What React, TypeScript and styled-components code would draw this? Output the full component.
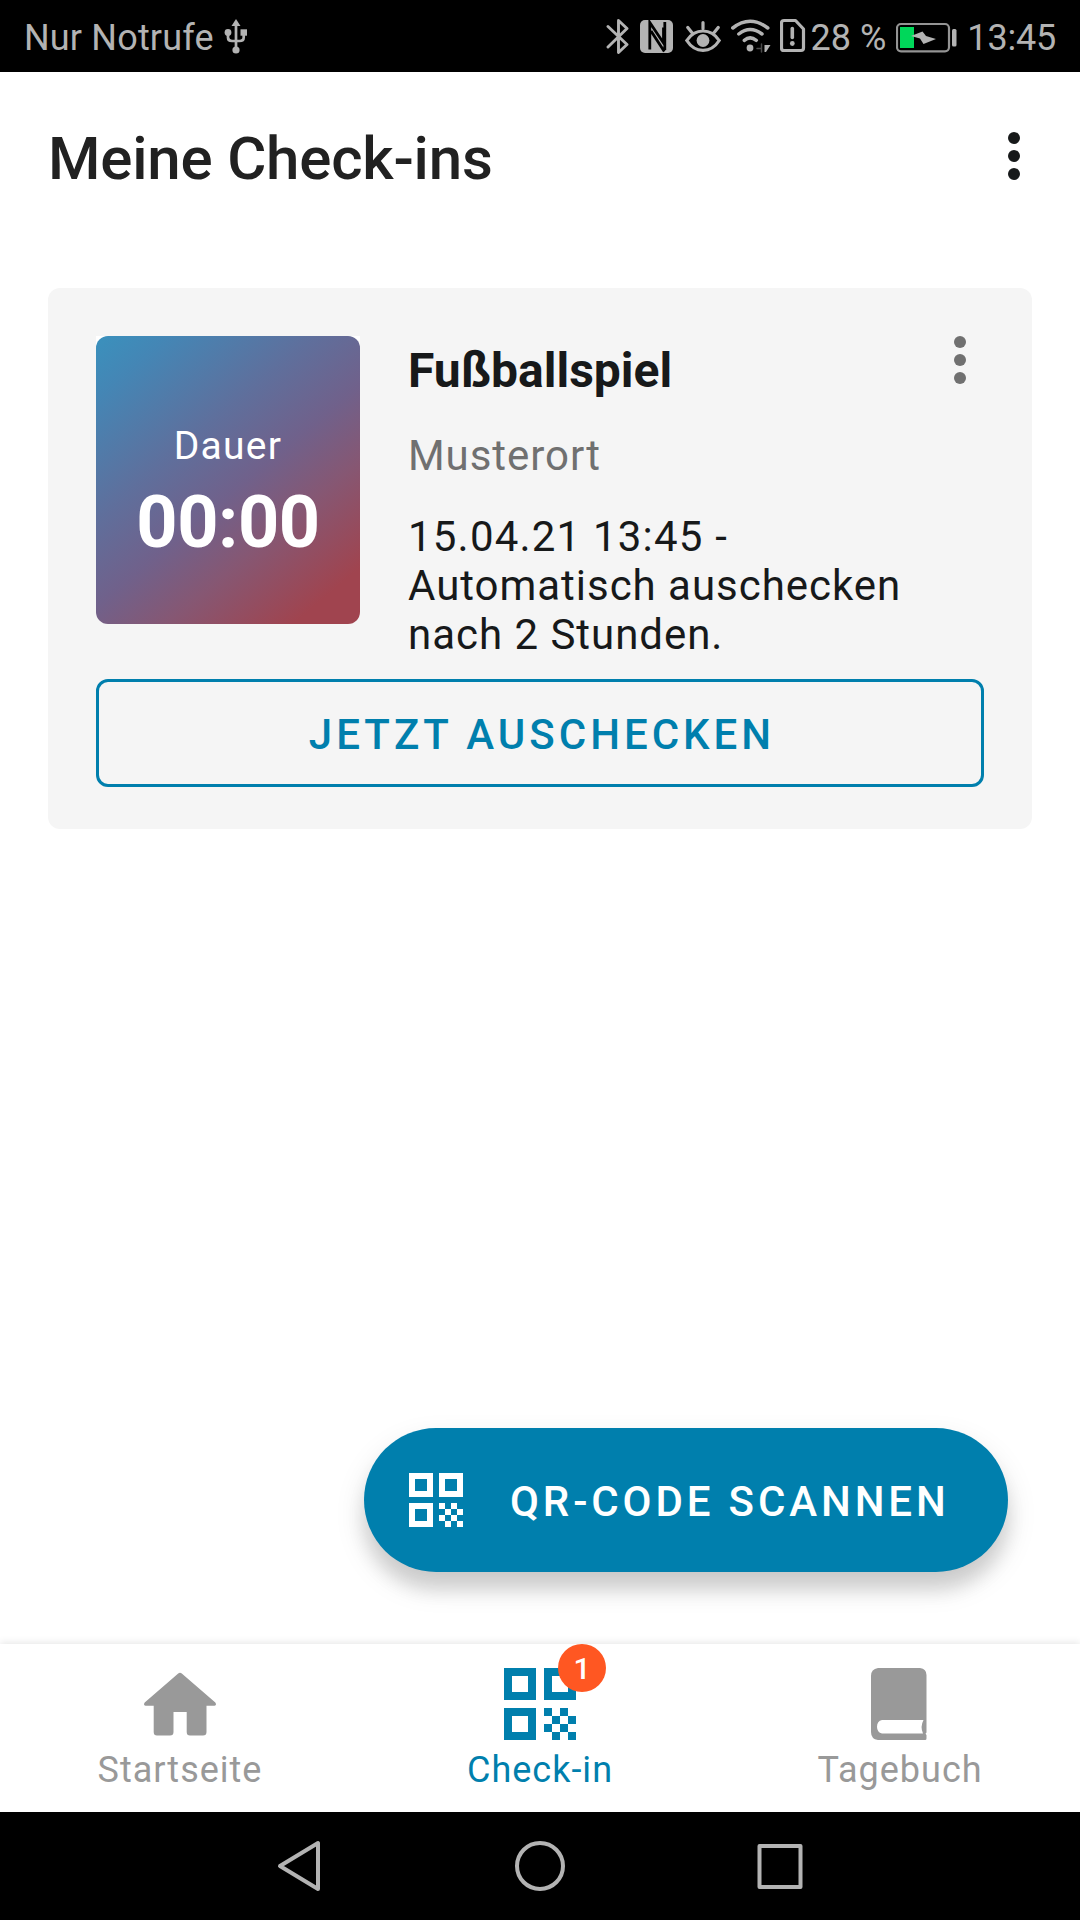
import React from "react";
import styled, { createGlobalStyle } from "styled-components";

const BLUE = "#007fad";
const GREY = "#999999";
const STATUS = "#b3b3b3";

const GlobalStyle = createGlobalStyle`
  *, *::before, *::after { box-sizing: border-box; }
  body { margin: 0; background: #fff; font-family: Roboto, "Noto Sans", sans-serif; }
  h1, h2, p { margin: 0; }
  button { font-family: inherit; border: 0; padding: 0; background: none; cursor: pointer; }
  svg { display: block; flex: none; }
`;

const Screen = styled.div`
  width: 1080px;
  height: 1920px;
  display: flex;
  flex-direction: column;
  background: #fff;
  overflow: hidden;
`;

const StatusBar = styled.div`
  flex: none;
  height: 72px;
  padding: 0 24px;
  display: flex;
  justify-content: space-between;
  background: #000;
  color: ${STATUS};
`;

const StatusGroup = styled.div`
  display: flex;
  align-items: center;
`;

const StatusText = styled.span<{ $start?: number; $spacing?: number }>`
  margin-left: ${(p) => p.$start ?? 0}px;
  padding-top: 3px;
  font-size: 36px;
  line-height: 42px;
  letter-spacing: ${(p) => p.$spacing ?? 0}px;
  white-space: nowrap;
`;

const StatusIcon = styled.svg<{ $start: number }>`
  margin-left: ${(p) => p.$start}px;
`;

const AppBar = styled.header`
  flex: none;
  height: 168px;
  padding: 0 48px;
  display: flex;
  align-items: center;
  justify-content: space-between;
`;

const PageTitle = styled.h1`
  padding-top: 5px;
  font-size: 60px;
  line-height: 70px;
  font-weight: 500;
  letter-spacing: -0.2px;
  color: #212121;
`;

const MenuButton = styled.button<{ $color: string; $end?: number }>`
  flex: none;
  width: 36px;
  height: 48px;
  margin-right: ${(p) => p.$end ?? 0}px;
  display: flex;
  justify-content: center;
  color: ${(p) => p.$color};
`;

const Main = styled.main`
  flex: 1;
  padding: 48px 48px 72px;
  display: flex;
  flex-direction: column;
  justify-content: space-between;
`;

const Card = styled.section`
  padding: 48px 48px 42px;
  border-radius: 12px;
  background: #f5f5f5;
  color: #17191a;
`;

const CardTop = styled.div`
  display: flex;
  align-items: flex-start;
`;

const TileFrame = styled.div`
  flex: none;
  width: 264px;
  height: 288px;
  margin-right: 48px;
  background: linear-gradient(#fff 0 20px, transparent 20px);
`;

const DurationTile = styled.div`
  height: 100%;
  padding-top: 86px;
  display: flex;
  flex-direction: column;
  align-items: center;
  gap: 11px;
  border-radius: 12px;
  color: #fff;
  background: linear-gradient(140deg, #3a91bd 0%, #4486b5 12%, #5f6f9c 36%, #70618b 53%, #865773 68%, #a0444f 89%, #a0444f 100%);
`;

const DurationLabel = styled.span`
  font-size: 39px;
  line-height: 48px;
  letter-spacing: 1.3px;
`;

const DurationTime = styled.span`
  font-size: 72px;
  line-height: 84px;
  font-weight: 700;
  letter-spacing: -0.4px;
`;

const Details = styled.div`
  flex: 1;
  padding-top: 7px;
`;

const EventName = styled.h2`
  font-size: 48px;
  line-height: 56px;
  font-weight: 700;
`;

const Place = styled.p`
  margin-top: 32px;
  font-size: 42px;
  line-height: 50px;
  letter-spacing: 0.95px;
  color: #707070;
`;

const Schedule = styled.p`
  margin-top: 31px;
  font-size: 42px;
  line-height: 49px;
  letter-spacing: 0.97px;
  white-space: pre-line;
`;

const StartTime = styled.span`
  letter-spacing: 1.2px;
`;

const OutlinedButton = styled.button`
  display: block;
  width: 100%;
  height: 108px;
  margin-top: 20px;
  padding: 4px 0 0 4px;
  border: 3px solid ${BLUE};
  border-radius: 12px;
  font-size: 42px;
  line-height: 50px;
  font-weight: 500;
  letter-spacing: 4px;
  color: ${BLUE};
`;

const Fab = styled.button`
  align-self: flex-end;
  width: 644px;
  height: 144px;
  margin-right: 24px;
  padding-left: 45px;
  display: flex;
  align-items: center;
  gap: 47px;
  border-radius: 72px;
  background: ${BLUE};
  color: #fff;
  font-size: 42px;
  line-height: 50px;
  font-weight: 500;
  letter-spacing: 3.88px;
  white-space: nowrap;
  box-shadow: 0 18px 18px rgba(0, 0, 0, 0.11), 0 14px 30px rgba(0, 0, 0, 0.13);
`;

const FabLabel = styled.span`
  padding-top: 3px;
`;

const BottomNav = styled.nav`
  flex: none;
  height: 168px;
  display: grid;
  grid-template-columns: repeat(3, 1fr);
  background: #fff;
  box-shadow: 0 -2px 7px rgba(0, 0, 0, 0.09);
`;

const NavItem = styled.div<{ $active?: boolean }>`
  padding-top: 24px;
  display: flex;
  flex-direction: column;
  align-items: center;
  font-size: 36px;
  line-height: 42px;
  letter-spacing: 1px;
  color: ${(p) => (p.$active ? BLUE : GREY)};
`;

const NavIcon = styled.div`
  position: relative;
  width: 72px;
  height: 72px;
  margin-bottom: 9px;
`;

const Badge = styled.span`
  position: absolute;
  left: 54px;
  top: -24px;
  width: 48px;
  height: 48px;
  border-radius: 50%;
  background: #ff5722;
  color: #fff;
  font-size: 30px;
  line-height: 49px;
  font-weight: 500;
  letter-spacing: 0;
  text-align: center;
`;

const SystemBar = styled.div`
  flex: none;
  height: 108px;
  display: flex;
  align-items: center;
  justify-content: center;
  gap: 185px;
  background: #000;
`;

function Dots() {
  return (
    <svg width="12" height="48" viewBox="0 0 12 48" fill="currentColor">
      <circle cx="6" cy="6" r="6" />
      <circle cx="6" cy="24" r="6" />
      <circle cx="6" cy="42" r="6" />
    </svg>
  );
}

function QrIcon({ size }: { size: number }) {
  return (
    <svg width={size} height={size} viewBox="0 0 18 18" shapeRendering="crispEdges">
      <path
        fill="currentColor"
        fillRule="evenodd"
        d="M0 0h8v8H0zM2 2v4h4V2zM10 0h8v8h-8zM12 2v4h4V2zM0 10h8v8H0zM2 12v4h4v-4zM10 10h2v2h-2zM14 10h2v2h-2zM12 12h2v2h-2zM16 12h2v2h-2zM10 14h2v2h-2zM14 14h2v2h-2zM12 16h2v2h-2zM16 16h2v2h-2z"
      />
    </svg>
  );
}

function HomeIcon() {
  return (
    <svg width="72" height="72" viewBox="0 0 72 72" fill="currentColor">
      <path d="M34.200 5.600Q36 4 37.800 5.600L71.300 34.500Q73 37.500 70.500 37.700H62.500V64Q62.500 67.500 59 67.500H46Q42.700 67.500 42.700 64V44H29.500V64Q29.500 67.500 26 67.500H13Q9.700 67.500 9.700 64V37.700H1.500Q-1 37.500 0.700 34.500Z" />
    </svg>
  );
}

function BookIcon() {
  return (
    <svg width="72" height="72" viewBox="1 0 72 72">
      <path
        fill="currentColor"
        fillRule="evenodd"
        d="M15 0H57Q63.500 1 63.500 7V64.500L62.500 65.700L63.500 67V70.500Q63.500 72 62 72H15Q8 71 8 64V8Q8 1 15 0ZM19 52Q14 53 14 58.800Q14 64.500 19 65.600H60Q57 58.500 60.500 52Z"
      />
    </svg>
  );
}

function UsbIcon() {
  return (
    <StatusIcon $start={10} width="24" height="36" viewBox="225 18 24 36" fill={STATUS}>
      <path d="M237 19l4.500 7h-9z" />
      <circle cx="237" cy="50" r="3.600" />
      <circle cx="229" cy="32.500" r="3.400" />
      <path d="M241.500 29.300h6.500v6.400h-6.500z" />
      <path d="M237 24v26M229 33v4.500q0 3.500 4 3.500h7.500q4.200 0 4.200-3.500V33" fill="none" stroke={STATUS} strokeWidth="2.700" />
    </StatusIcon>
  );
}

function BluetoothIcon() {
  return (
    <StatusIcon $start={0} width="24" height="36" viewBox="606 18 24 36" fill="none" stroke={STATUS} strokeWidth="2.900" strokeLinecap="round" strokeLinejoin="round">
      <path d="M608 26.500l19 18-8.500 8V20.500l8.500 8-19 18.500" />
    </StatusIcon>
  );
}

function NfcIcon() {
  return (
    <StatusIcon $start={10} width="33" height="36" viewBox="640 18 33 36">
      <rect x="640" y="20" width="33" height="33" rx="5" fill={STATUS} />
      <path
        d="M649.800 49.500V22.500L663.500 43V27.500M664.300 51.500L651 31M664.800 22V50"
        fill="none"
        stroke="#000"
        strokeWidth="2.800"
      />
    </StatusIcon>
  );
}

function EyeIcon() {
  return (
    <StatusIcon $start={12} width="36" height="36" viewBox="685 18 36 36" fill="none" stroke={STATUS} strokeWidth="3.200" strokeLinecap="round">
      <path d="M686.800 40.500Q693 31 703 31T719.200 40.500Q713 50.300 703 50.300T686.800 40.500ZM687.800 27.500l4 5M703 22.500v6M718.200 27.500l-4 5" />
      <circle cx="703" cy="40.500" r="6.400" fill={STATUS} stroke="none" />
    </StatusIcon>
  );
}

function WifiIcon() {
  return (
    <StatusIcon $start={10} width="40" height="36" viewBox="731 18 40 36" fill="none" stroke={STATUS} strokeWidth="3.500" strokeLinecap="round">
      <path d="M732.800 28Q750 14.500 767.800 28M738.800 34Q750 25 762 34M744.300 40.300Q750 35.500 756.300 40.300" />
      <circle cx="750" cy="48" r="3.400" fill={STATUS} stroke="none" />
      <path d="M764.500 45h6l-4.500 7h-1.500z" fill={STATUS} stroke="none" />
      <path d="M761.500 44v8M757 48.500h4" stroke="#4a4a4a" strokeWidth="1.500" />
    </StatusIcon>
  );
}

function SimIcon() {
  return (
    <StatusIcon $start={9} width="26" height="36" viewBox="780 18 26 36" fill="none" stroke={STATUS} strokeWidth="3.200" strokeLinejoin="round">
      <path d="M784 20.500h11.500l8 8.500v19q0 2.500-2.500 2.500h-17q-2.500 0-2.500-2.500V23q0-2.500 2.500-2.500z" />
      <path d="M792.300 28.500v9" strokeWidth="3.600" strokeLinecap="round" />
      <circle cx="792.300" cy="43.500" r="2.400" fill={STATUS} stroke="none" />
    </StatusIcon>
  );
}

function BatteryIcon() {
  return (
    <StatusIcon $start={10} width="61" height="36" viewBox="896 18 61 36">
      <rect x="897" y="24" width="52" height="27.300" rx="4" fill="none" stroke="#949494" strokeWidth="2.200" />
      <path d="M900 27h14v21h-14z" fill="#00d75a" />
      <path d="M911 36l11.500-4.500 3.500 4.500 10 3-12.500 5-3.500-5.500z" fill={STATUS} />
      <rect x="952" y="29" width="4.500" height="17.500" rx="1.500" fill={STATUS} />
    </StatusIcon>
  );
}

export default function App() {
  return (
    <Screen>
      <GlobalStyle />
      <StatusBar>
        <StatusGroup>
          <StatusText $spacing={0.17}>Nur Notrufe</StatusText>
          <UsbIcon />
        </StatusGroup>
        <StatusGroup>
          <BluetoothIcon />
          <NfcIcon />
          <EyeIcon />
          <WifiIcon />
          <SimIcon />
          <StatusText $start={5}>28 %</StatusText>
          <BatteryIcon />
          <StatusText $start={10} $spacing={-0.2}>13:45</StatusText>
        </StatusGroup>
      </StatusBar>

      <AppBar>
        <PageTitle>Meine Check-ins</PageTitle>
        <MenuButton $color="#17191a" aria-label="Menü">
          <Dots />
        </MenuButton>
      </AppBar>

      <Main>
        <Card>
          <CardTop>
            <TileFrame>
              <DurationTile>
                <DurationLabel>Dauer</DurationLabel>
                <DurationTime>00:00</DurationTime>
              </DurationTile>
            </TileFrame>
            <Details>
              <EventName>Fußballspiel</EventName>
              <Place>Musterort</Place>
              <Schedule>
                <StartTime>15.04.21 13:45 -</StartTime>
                {"\nAutomatisch auschecken\nnach 2 Stunden."}
              </Schedule>
            </Details>
            <MenuButton $color="#707070" $end={6} aria-label="Optionen">
              <Dots />
            </MenuButton>
          </CardTop>
          <OutlinedButton>JETZT AUSCHECKEN</OutlinedButton>
        </Card>

        <Fab>
          <QrIcon size={54} />
          <FabLabel>QR-CODE SCANNEN</FabLabel>
        </Fab>
      </Main>

      <BottomNav>
        <NavItem>
          <NavIcon>
            <HomeIcon />
          </NavIcon>
          Startseite
        </NavItem>
        <NavItem $active>
          <NavIcon>
            <QrIcon size={72} />
            <Badge>1</Badge>
          </NavIcon>
          Check-in
        </NavItem>
        <NavItem>
          <NavIcon>
            <BookIcon />
          </NavIcon>
          Tagebuch
        </NavItem>
      </BottomNav>

      <SystemBar>
        <svg width="50" height="60" viewBox="0 0 50 60" fill="none" stroke={STATUS} strokeWidth="4" strokeLinejoin="round">
          <path d="M43 7v46L5 30z" />
        </svg>
        <svg width="60" height="60" viewBox="0 0 60 60" fill="none" stroke={STATUS} strokeWidth="4">
          <circle cx="30" cy="30" r="23" />
        </svg>
        <svg width="50" height="60" viewBox="0 0 50 60" fill="none" stroke={STATUS} strokeWidth="4" strokeLinejoin="round">
          <rect x="4.500" y="10" width="41" height="41" />
        </svg>
      </SystemBar>
    </Screen>
  );
}
